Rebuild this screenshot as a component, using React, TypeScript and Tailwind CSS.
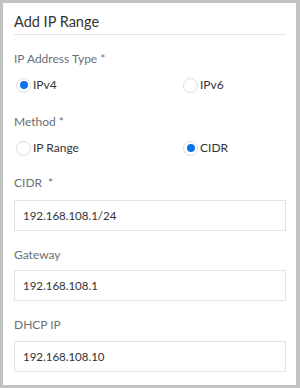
import React from "react";

function Radio({ checked, label, wide }: { checked: boolean; label: string; wide?: boolean }) {
  return (
    <div className={`flex h-[16px] items-center ${wide ? "w-[167px]" : ""}`}>
      <span className="flex h-[15px] w-[15px] items-center justify-center rounded-full border border-[#d9dde3] bg-white">
        {checked && <span className="h-[8px] w-[8px] rounded-full bg-[#0b72e7]" />}
      </span>
      <span className="ml-[2px] text-[12px] leading-[16px] text-[#333]">{label}</span>
    </div>
  );
}

function Field({ label, value, top, gap }: { label: React.ReactNode; value: string; top: string; gap: string }) {
  return (
    <div className={top}>
      <div className="text-[12px] leading-[16px] text-[#6b6f76]">{label}</div>
      <div className={`${gap} flex h-[31px] items-center border border-[#dfe3e8] px-[8px] text-[11.5px] text-[#333]`}>
        {value}
      </div>
    </div>
  );
}

export default function App() {
  return (
    <div
      className="h-[388px] w-[300px] bg-[#c2c2c2] pb-[3px] pl-[3px] pr-[4px] pt-[3px]"
      style={{ fontFamily: 'Lato, "Noto Sans", sans-serif' }}
    >
      <div className="h-full bg-white pl-[11px] pr-[10px] pt-[9px]">
        <div className="border-b border-[#dfe5ec] pb-[2px] text-[14.5px] leading-[20px] text-[#333]">Add IP Range</div>
        <div className="mt-[16px] text-[12px] leading-[16px] text-[#6b6f76]">IP Address Type *</div>
        <div className="mt-[10px] flex pl-[2px]">
          <Radio checked wide label="IPv4" />
          <Radio checked={false} label="IPv6" />
        </div>
        <div className="mt-[21px] text-[12px] leading-[16px] text-[#6b6f76]">Method *</div>
        <div className="mt-[10px] flex pl-[2px]">
          <Radio checked={false} wide label="IP Range" />
          <Radio checked label="CIDR" />
        </div>
        <Field
          top="mt-[19px]"
          gap="mt-[9px]"
          label={
            <>
              CIDR<span className="ml-[6px]">*</span>
            </>
          }
          value="192.168.108.1/24"
        />
        <Field top="mt-[16px]" gap="mt-[7px]" label="Gateway" value="192.168.108.1" />
        <Field top="mt-[16px]" gap="mt-[8px]" label="DHCP IP" value="192.168.108.10" />
      </div>
    </div>
  );
}
